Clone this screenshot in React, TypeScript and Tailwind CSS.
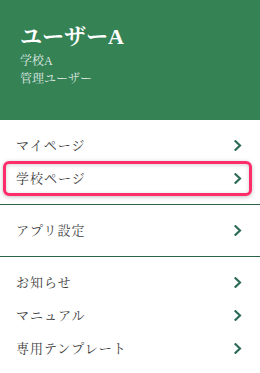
import React from 'react';

type MenuItem = {
  label: string;
  highlighted?: boolean;
};

const sections: MenuItem[][] = [
  [{ label: 'マイページ' }, { label: '学校ページ', highlighted: true }],
  [{ label: 'アプリ設定' }],
  [{ label: 'お知らせ' }, { label: 'マニュアル' }, { label: '専用テンプレート' }],
];

const Chevron: React.FC = () => (
  <svg width="8" height="11" viewBox="0 0 8 11" fill="none" className="shrink-0">
    <path d="M1.5 1.2 L6 5.5 L1.5 9.8" stroke="#2e6a58" strokeWidth="2.2" strokeLinecap="square" />
  </svg>
);

const MenuRow: React.FC<{ item: MenuItem }> = ({ item }) => (
  <div className="relative flex h-[33px] items-center justify-between pl-4 pr-[18px]">
    <span className="text-[13px] tracking-[1px] text-[#3d3d3d]">{item.label}</span>
    <Chevron />
    {item.highlighted && (
      <div className="pointer-events-none absolute -top-px -bottom-px left-[3px] right-[8px] rounded-[6px] border-[3px] border-[#ff2c6c] shadow-[0_1px_4px_rgba(0,0,0,0.25),inset_0_1px_4px_rgba(0,0,0,0.18)]" />
    )}
  </div>
);

export default function App() {
  return (
    <div
      className="h-[373px] w-[260px] overflow-hidden bg-white"
      style={{ fontFamily: '"Liberation Serif", "Noto Serif CJK JP", "Noto Sans CJK JP", serif' }}
    >
      <div className="h-[120px] bg-[#358255] px-5 pt-[22px]">
        <h1 className="text-[22px] font-bold leading-[29px] text-white">ユーザーA</h1>
        <p className="mt-px text-[12px] leading-[18px] text-[#dfe8e2]">学校A</p>
        <p className="text-[12px] leading-[18px] text-[#dfe8e2]">管理ユーザー</p>
      </div>

      {sections.map((section, i) => (
        <div key={i} className={i < sections.length - 1 ? 'border-b border-[#2c6346] py-[9px]' : 'py-[9px]'}>
          {section.map((item) => (
            <MenuRow key={item.label} item={item} />
          ))}
        </div>
      ))}
    </div>
  );
}
